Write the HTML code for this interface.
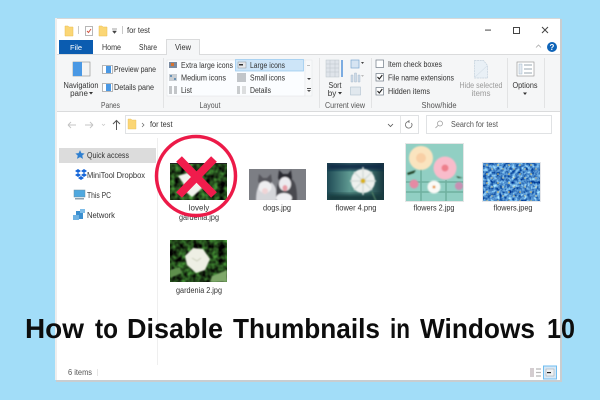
<!DOCTYPE html>
<html><head><meta charset="utf-8">
<style>
html,body{margin:0;padding:0;width:600px;height:400px;overflow:hidden;background:#a2ddf8}
svg{display:block;filter:blur(.3px)}
text{font-family:"Liberation Sans",sans-serif;font-size:8px;fill:#333}
.g{fill:#555}
.c{text-anchor:middle}
.h{font-size:27.5px;font-weight:bold;fill:#0d0d0d}
</style></head><body>
<svg width="600" height="400" viewBox="0 0 600 400" xmlns="http://www.w3.org/2000/svg">
<defs>
<filter id="b" x="-10%" y="-10%" width="120%" height="120%"><feGaussianBlur stdDeviation="0.7"/></filter>
<filter id="b2" x="-20%" y="-20%" width="140%" height="140%"><feGaussianBlur stdDeviation="2"/></filter>
<filter id="leaf" x="0" y="0" width="100%" height="100%" color-interpolation-filters="sRGB"><feTurbulence type="fractalNoise" baseFrequency="0.16" numOctaves="2" seed="4"/><feColorMatrix values="0.5 0 0 0 -0.12  1.1 0 0 0 -0.28  0.4 0 0 0 -0.1  0 0 0 0 1"/></filter>
<filter id="blue" x="0" y="0" width="100%" height="100%" color-interpolation-filters="sRGB"><feTurbulence type="fractalNoise" baseFrequency="0.32" numOctaves="2" seed="9"/><feColorMatrix values="1.2 0 0 0 -0.3  1.2 0 0 0 -0.05  0.8 0 0 0 0.4  0 0 0 0 1"/></filter>
<clipPath id="c1"><rect x="170" y="163" width="57" height="37"/></clipPath>
<clipPath id="c2"><rect x="249" y="169" width="57" height="31"/></clipPath>
<clipPath id="c3"><rect x="327" y="163" width="57" height="37"/></clipPath>
<clipPath id="c4"><rect x="406" y="144" width="57" height="57"/></clipPath>
<clipPath id="c5"><rect x="483" y="163" width="57" height="38"/></clipPath>
<clipPath id="c6"><rect x="170" y="240" width="57" height="42"/></clipPath>
<linearGradient id="g3" x1="0" y1="0" x2="1" y2="0"><stop offset="0" stop-color="#1f4a55"/><stop offset=".4" stop-color="#5f9a92"/><stop offset=".75" stop-color="#3d6f6b"/><stop offset="1" stop-color="#17363e"/></linearGradient>
<pattern id="fl" width="11" height="9" patternUnits="userSpaceOnUse"><circle cx="3" cy="3" r=".8" fill="#e6c868"/><circle cx="8" cy="7" r=".7" fill="#efdc90"/></pattern>
</defs>

<rect width="600" height="400" fill="#a2ddf8"/>
<rect x="56" y="19" width="506" height="363" fill="#c9cdd0"/>
<rect x="55" y="18" width="505" height="362" fill="#fff"/>
<rect x="55" y="18" width="505" height="1" fill="#d8d8d8"/>
<rect x="55" y="18" width="2" height="362" fill="#eeeeee"/>

<!-- title bar -->
<path d="M65 26h3l1 1h4v9h-8z" fill="#fbd675" stroke="#e8bd55" stroke-width=".5"/>
<rect x="78" y="26" width="1" height="8" fill="#c8c8c8"/>
<rect x="85.5" y="26.5" width="7" height="9" fill="#fff" stroke="#999" stroke-width=".7"/>
<path d="M87 31l1.500 1.500 2.500-3.500" fill="none" stroke="#d2503c" stroke-width="1"/>
<path d="M99 26h3l1 1h4v9h-8z" fill="#fbd675" stroke="#e8bd55" stroke-width=".5"/>
<path d="M112 29h5M112.500 31h4l-2 2.500z" fill="#444" stroke="#444" stroke-width=".5"/>
<rect x="122" y="26" width="1" height="8" fill="#c8c8c8"/>
<text x="127" y="33" textLength="23" lengthAdjust="spacingAndGlyphs">for test</text>

<rect x="485" y="29.5" width="6" height="1.2" fill="#666"/>
<rect x="513.5" y="27.5" width="6" height="6" fill="none" stroke="#444" stroke-width="1"/>
<path d="M542 27l6 6M548 27l-6 6" stroke="#444" stroke-width="1"/>
<path d="M536 47.500l2.500-2.500 2.500 2.500" fill="none" stroke="#aaa" stroke-width=".8"/>
<circle cx="552" cy="47" r="5" fill="#0f64b8"/>
<text x="552" y="50" class="c" style="fill:#fff;font-weight:bold;font-size:8px">?</text>

<!-- tabs -->
<rect x="59" y="40" width="34" height="14" fill="#0b5cb0"/>
<text x="76" y="50" class="c" style="fill:#fff;font-size:7.5px">File</text>
<text x="102" y="50" textLength="19" lengthAdjust="spacingAndGlyphs">Home</text>
<text x="139" y="50" textLength="18" lengthAdjust="spacingAndGlyphs">Share</text>
<rect x="57" y="54" width="503" height="58" fill="#f5f6f7"/>
<rect x="57" y="54" width="503" height="1" fill="#dadbdc"/>
<path d="M166.500 54.500v-15h33v15" fill="#f5f6f7" stroke="#dadbdc"/>
<rect x="167" y="53.5" width="32" height="2" fill="#f5f6f7"/>
<text x="175" y="50" textLength="16" lengthAdjust="spacingAndGlyphs">View</text>
<rect x="57" y="111" width="503" height="1" fill="#dadbdc"/>

<!-- panes -->
<rect x="73" y="62" width="17" height="14" fill="#f4f4f4" stroke="#8a8a8a" stroke-width=".6"/>
<rect x="73" y="62" width="9" height="14" fill="#4a98e4"/>
<text x="81" y="88" class="c" textLength="35" lengthAdjust="spacingAndGlyphs">Navigation</text>
<text x="79" y="96" class="c">pane</text><path d="M89 92h4l-2 2.500z" fill="#333"/>
<rect x="102.5" y="65.5" width="10" height="8" fill="#fff" stroke="#8a8a8a" stroke-width=".6"/><rect x="106" y="66" width="5" height="7" fill="#4a98e4"/>
<text x="114" y="72" textLength="42" lengthAdjust="spacingAndGlyphs">Preview pane</text>
<rect x="102.5" y="83.5" width="10" height="8" fill="#fff" stroke="#8a8a8a" stroke-width=".6"/><rect x="106" y="84" width="5" height="7" fill="#4a98e4"/>
<text x="114" y="90" textLength="40" lengthAdjust="spacingAndGlyphs">Details pane</text>
<text x="110.5" y="108" class="c g" textLength="19" lengthAdjust="spacingAndGlyphs">Panes</text>
<rect x="163" y="58" width="1" height="50" fill="#e2e3e4"/>

<!-- layout -->
<rect x="167" y="60" width="138" height="36" fill="#fbfdff" stroke="#e3e5e7" stroke-width=".6"/>
<rect x="235.5" y="59.5" width="68" height="11.5" fill="#cde5f8" stroke="#93c6ee" stroke-width=".7"/>
<rect x="169" y="62" width="8" height="6" fill="#7a8aa0"/><rect x="171" y="63" width="3" height="3" fill="#d8732f"/>
<rect x="169" y="74" width="8" height="7" fill="#c9ced3"/><rect x="170" y="75" width="2" height="2" fill="#6a93b5"/><rect x="174" y="78" width="2" height="2" fill="#6a93b5"/>
<rect x="169" y="86" width="3" height="8" fill="#c3c6c9"/><rect x="174" y="86" width="3" height="8" fill="#c3c6c9"/>
<text x="181" y="68" textLength="52" lengthAdjust="spacingAndGlyphs">Extra large icons</text>
<text x="181" y="80.5" textLength="45" lengthAdjust="spacingAndGlyphs">Medium icons</text>
<text x="181" y="93" textLength="11" lengthAdjust="spacingAndGlyphs">List</text>
<rect x="238" y="62" width="8" height="6" fill="#e6e9ec" stroke="#8a8f94" stroke-width=".5"/><rect x="239" y="64" width="4" height="1.5" fill="#333"/>
<rect x="237" y="73" width="9" height="9" fill="#c2c6ca"/>
<rect x="237" y="86" width="3" height="8" fill="#c9ccce"/><rect x="242" y="86" width="4" height="8" fill="#dcdedf"/>
<text x="250" y="68" textLength="35" lengthAdjust="spacingAndGlyphs">Large icons</text>
<text x="250" y="80.5" textLength="35" lengthAdjust="spacingAndGlyphs">Small icons</text>
<text x="250" y="93" textLength="21" lengthAdjust="spacingAndGlyphs">Details</text>
<rect x="305" y="60" width="7" height="36" fill="#f8f9fa" stroke="#e3e5e7" stroke-width=".5"/>
<rect x="307" y="65" width="3" height="1" fill="#bbb"/><path d="M307 78h4l-2 2z" fill="#444"/><path d="M307 88h4v1h-4zM307 90h4l-2 2z" fill="#555"/>
<text x="210" y="108" class="c g" textLength="21" lengthAdjust="spacingAndGlyphs">Layout</text>
<rect x="319" y="58" width="1" height="50" fill="#e2e3e4"/>

<!-- current view -->
<rect x="326" y="60" width="13" height="17" fill="#dfe4ea" stroke="#bcc3ca" stroke-width=".5"/>
<path d="M326 64h13M326 68h13M326 72h13M330 60v17M335 60v17" stroke="#bcc3ca" stroke-width=".5"/>
<path d="M342 60v17" stroke="#2b7cd3" stroke-width="1.2"/>
<text x="335" y="88" class="c" textLength="13" lengthAdjust="spacingAndGlyphs">Sort</text>
<text x="332" y="96" class="c">by</text><path d="M338 92h4l-2 2.500z" fill="#333"/>
<rect x="351" y="60" width="8" height="8" fill="#d6e4f2" stroke="#7aa8d2" stroke-width=".7"/><path d="M361 62h3l-1.500 2z" fill="#444"/>
<path d="M351 75h2v7h-2zM354.500 73h2v9h-2zM358 75h2v7h-2z" fill="#cddbe8" stroke="#9fb3c5" stroke-width=".4"/><path d="M361 75h3l-1.500 2z" fill="#bbb"/>
<rect x="350.5" y="87" width="10" height="8" fill="#e1e8ee" stroke="#a4b7c8" stroke-width=".5"/>
<text x="345" y="108" class="c g" textLength="40" lengthAdjust="spacingAndGlyphs">Current view</text>
<rect x="371" y="58" width="1" height="50" fill="#e2e3e4"/>

<!-- show/hide -->
<rect x="376" y="60" width="7.5" height="7.5" fill="#fff" stroke="#6f7a85" stroke-width=".7"/>
<rect x="376" y="73.5" width="7.5" height="7.5" fill="#fff" stroke="#6f7a85" stroke-width=".7"/>
<path d="M377.500 77l1.800 2 3-4" fill="none" stroke="#222" stroke-width="1.1"/>
<rect x="376" y="87.5" width="7.5" height="7.5" fill="#fff" stroke="#6f7a85" stroke-width=".7"/>
<path d="M377.500 91l1.800 2 3-4" fill="none" stroke="#222" stroke-width="1.1"/>
<text x="388" y="67" textLength="54" lengthAdjust="spacingAndGlyphs">Item check boxes</text>
<text x="388" y="80.5" textLength="66" lengthAdjust="spacingAndGlyphs">File name extensions</text>
<text x="388" y="94" textLength="42" lengthAdjust="spacingAndGlyphs">Hidden items</text>
<path d="M474.500 60.500h9l4 5v12.500h-13z" fill="#e9f0f6" stroke="#c3d0dc" stroke-width=".7" stroke-dasharray="2 .6"/>
<path d="M475 77l12-11" stroke="#d5dfe8" stroke-width=".6"/>
<text x="481" y="88" class="c" style="fill:#9a9a9a" textLength="43" lengthAdjust="spacingAndGlyphs">Hide selected</text>
<text x="481" y="96" class="c" style="fill:#9a9a9a">items</text>
<text x="439" y="108" class="c g" textLength="35" lengthAdjust="spacingAndGlyphs">Show/hide</text>
<rect x="507" y="58" width="1" height="50" fill="#e2e3e4"/>

<!-- options -->
<rect x="517" y="62" width="17" height="14" fill="#fff" stroke="#8c8c8c" stroke-width=".6"/>
<rect x="519" y="64" width="3" height="10" fill="#e4eaf0" stroke="#8faac2" stroke-width=".4"/>
<path d="M524 65h8M524 69h8M524 73h8" stroke="#7a8a98" stroke-width=".7"/>
<text x="525" y="88" class="c" textLength="25" lengthAdjust="spacingAndGlyphs">Options</text>
<path d="M523 92.500h4l-2 2.500z" fill="#333"/>
<rect x="544" y="58" width="1" height="50" fill="#e2e3e4"/>

<!-- address -->
<path d="M68 125h8M68 125l3-3M68 125l3 3" fill="none" stroke="#c4c4c4" stroke-width=".9"/>
<path d="M93 125h-8M93 125l-3-3M93 125l-3 3" fill="none" stroke="#c4c4c4" stroke-width=".9"/>
<path d="M102 124l1.500 1.500 1.500-1.500" fill="none" stroke="#c4c4c4" stroke-width=".7"/>
<path d="M116.500 130v-9M113 124l3.500-3.500 3.500 3.500" fill="none" stroke="#555" stroke-width="1"/>
<rect x="125.5" y="115.500" width="293" height="18" fill="#fff" stroke="#e0e2e4"/>
<path d="M128 119h3l1 1h4v9h-8z" fill="#fbd675" stroke="#e8bd55" stroke-width=".4"/>
<path d="M142 123l2 2-2 2" fill="none" stroke="#666" stroke-width=".7"/>
<text x="150" y="127" textLength="22.5" lengthAdjust="spacingAndGlyphs">for test</text>
<path d="M388 124l2.500 2.500 2.500-2.500" fill="none" stroke="#555" stroke-width=".8"/>
<rect x="400" y="116" width="1" height="17" fill="#e4e5e6"/>
<path d="M411.500 123a3.300 3.300 0 1 1-2.500-1.500M409 120v3" fill="none" stroke="#666" stroke-width=".8"/>
<rect x="426.5" y="115.500" width="125" height="18" fill="#fff" stroke="#e0e2e4"/>
<circle cx="440" cy="123.500" r="2.500" fill="none" stroke="#999" stroke-width=".7"/><path d="M438 125.500l-2.500 2.500" stroke="#999" stroke-width=".8"/>
<text x="451" y="127" class="g" textLength="47" lengthAdjust="spacingAndGlyphs">Search for test</text>

<!-- nav pane -->
<rect x="157" y="138" width="1" height="227" fill="#efefef"/>
<rect x="59" y="148" width="97" height="15" fill="#dcdcdc"/>
<path d="M80 150.500l1.300 2.800 3 .3-2.200 2 .7 3-2.800-1.600-2.800 1.600.7-3-2.200-2 3-.3z" fill="#2f7fd0" stroke="#2f7fd0" stroke-width=".3"/>
<text x="87" y="158" textLength="42" lengthAdjust="spacingAndGlyphs">Quick access</text>
<path d="M75 171l3-2 3 2-3 2zM81 171l3-2 3 2-3 2zM75 175l3-2 3 2-3 2zM81 175l3-2 3 2-3 2zM78 178l3-2 3 2-3 2z" fill="#1565d8"/>
<text x="87" y="178" textLength="58" lengthAdjust="spacingAndGlyphs">MiniTool Dropbox</text>
<rect x="74" y="190" width="11" height="7" fill="#4fa8df" stroke="#6f8fa5" stroke-width=".5"/><rect x="75" y="198" width="9" height="1.5" fill="#8fa0ad"/>
<text x="87" y="198" textLength="24" lengthAdjust="spacingAndGlyphs">This PC</text>
<rect x="76" y="211" width="7" height="8" fill="#3a8fd0"/><rect x="73" y="215" width="6" height="5" fill="#6fb2e2"/><rect x="80" y="209" width="5" height="4" fill="#7fbde8"/>
<text x="87" y="218" textLength="28" lengthAdjust="spacingAndGlyphs">Network</text>

<!-- thumbnails -->
<g clip-path="url(#c1)"><rect x="170" y="163" width="57" height="37" filter="url(#leaf)"/><g filter="url(#b)"><path d="M178 176l9-3 6 3 6 3 7 5-8 8-6 5-6-5-3-9z" fill="#f2f3ee"/></g></g>
<rect x="170" y="163" width="57" height="1" fill="#222"/>
<text x="199" y="210.5" class="c">lovely</text>
<text x="199" y="220" class="c" textLength="40" lengthAdjust="spacingAndGlyphs">gardenia.jpg</text>

<g clip-path="url(#c2)"><rect x="249" y="169" width="57" height="32" fill="#7c7e84"/><g filter="url(#b)">
<path d="M256 201c0-13 3-18 9-20 5-1 10 3 11 9l1 11z" fill="#d5d6da"/>
<path d="M258 181l1-7 4 4h4l4-4 1 7-2 4h-10z" fill="#55555b"/>
<ellipse cx="265" cy="187" rx="6.500" ry="6" fill="#eeeef0"/><ellipse cx="265" cy="191" rx="3" ry="3" fill="#f0d4d6"/>
<path d="M276 201c0-13 1-20 8-24 6-1 11 3 12 10 1 5 1 10 1 14z" fill="#4a4a50"/>
<path d="M278 178l1-8 4 4h5l3-4 1 8-2 4h-10z" fill="#2c2c32"/>
<ellipse cx="285" cy="184" rx="6" ry="7" fill="#ecebef"/><ellipse cx="285" cy="188" rx="2.500" ry="3" fill="#e79ba5"/><ellipse cx="284" cy="198" rx="8" ry="5" fill="#efeff2"/>
</g></g>
<text x="277" y="210.5" class="c" textLength="28" lengthAdjust="spacingAndGlyphs">dogs.jpg</text>

<g clip-path="url(#c3)"><rect x="327" y="163" width="57" height="37" fill="url(#g3)"/><rect x="327" y="163" width="57" height="7" fill="#0f2c45" filter="url(#b2)"/><rect x="327" y="194" width="57" height="8" fill="#173b3e" filter="url(#b2)"/>
<g filter="url(#b)"><circle cx="363" cy="181" r="12" fill="#eef1ee"/><path d="M363 167v28M350 181h26M354 172l18 18M372 172l-18 18" stroke="#d3dcd8" stroke-width="1.5"/><circle cx="363" cy="181" r="2.500" fill="#d8b21c"/><path d="M372 192l4 9" stroke="#5a8a6a" stroke-width="1"/></g></g>
<text x="356" y="210.5" class="c" textLength="41" lengthAdjust="spacingAndGlyphs">flower 4.png</text>

<g clip-path="url(#c4)"><rect x="406" y="144" width="57" height="57" fill="#91cfc3"/>
<path d="M406 182h57M406 192h57M421 168v33M446 180v21" stroke="#6fb09f" stroke-width="1.5"/>
<g filter="url(#b)"><circle cx="421" cy="158" r="12" fill="#fae4bf"/><circle cx="421" cy="158" r="5" fill="#f8cfa5"/>
<circle cx="445" cy="168" r="11.500" fill="#f9bccb"/><circle cx="445" cy="168" r="3.500" fill="#ee7f8c"/>
<circle cx="434" cy="187" r="6.500" fill="#fafaf7"/><circle cx="434" cy="187" r="1.500" fill="#e8973a"/>
<circle cx="414" cy="184" r="4.500" fill="#e58aa4"/><circle cx="459" cy="186" r="4" fill="#c88fb3"/>
<path d="M407 173l9-3-2 3-6 2zM456 176l7 2-5 0z" fill="#1e3c22"/></g></g>
<rect x="405.5" y="143.500" width="58" height="58" fill="none" stroke="#e4e6e6"/>
<text x="434" y="210.5" class="c" textLength="41" lengthAdjust="spacingAndGlyphs">flowers 2.jpg</text>

<g clip-path="url(#c5)"><rect x="483" y="163" width="57" height="38" filter="url(#blue)"/><rect x="483" y="163" width="57" height="38" fill="url(#fl)"/></g>
<rect x="482.5" y="162.500" width="58" height="39" fill="none" stroke="#e4e6ea"/>
<text x="513" y="210.5" class="c" textLength="39" lengthAdjust="spacingAndGlyphs">flowers.jpeg</text>

<g clip-path="url(#c6)"><rect x="170" y="240" width="57" height="42" filter="url(#leaf)"/><g filter="url(#b)"><path d="M185 256l8-8 10 1 7 10-5 11-9 3-9-8z" fill="#eeefe4"/><path d="M192 258l5 3 4-3" stroke="#c9cdb8" stroke-width="1" fill="none"/><path d="M212 276l15-6v12h-17z" fill="#7fa86a"/><path d="M170 270l10-3 2 6-12 5z" fill="#5e8f4e"/></g></g>
<text x="199" y="293" class="c" textLength="46" lengthAdjust="spacingAndGlyphs">gardenia 2.jpg</text>

<!-- red mark -->
<circle cx="196" cy="176" r="39.5" fill="none" stroke="#ec1a48" stroke-width="3.5"/>
<path d="M179 159l35 36M214 159l-35 36" stroke="#f01c4c" stroke-width="8"/>

<!-- status -->
<text x="68" y="375" class="g" textLength="24" lengthAdjust="spacingAndGlyphs">6 items</text>
<rect x="97" y="369" width="1" height="7" fill="#e6e6e6"/>
<rect x="530" y="368" width="4" height="9" fill="#d4cdd0"/><path d="M536 369h5M536 372.500h5M536 376h5" stroke="#b8b8b8" stroke-width="1.2"/>
<rect x="543.5" y="366" width="13" height="13" fill="#d7e8f6" stroke="#6fbdf0"/>
<rect x="546" y="369" width="8" height="7" fill="#eef1f3" stroke="#99a0a6" stroke-width=".5"/><rect x="547" y="372" width="4" height="1.2" fill="#222"/>

<!-- headline: each word is fitted to its measured extent -->
<text x="25" y="338" class="h" textLength="59" lengthAdjust="spacingAndGlyphs">How</text>
<text x="95" y="338" class="h" textLength="23" lengthAdjust="spacingAndGlyphs">to</text>
<text x="127" y="338" class="h" textLength="96" lengthAdjust="spacingAndGlyphs">Disable</text>
<text x="233" y="338" class="h" textLength="147" lengthAdjust="spacingAndGlyphs">Thumbnails</text>
<text x="390" y="338" class="h" textLength="20" lengthAdjust="spacingAndGlyphs">in</text>
<text x="420" y="338" class="h" textLength="115" lengthAdjust="spacingAndGlyphs">Windows</text>
<text x="547" y="338" class="h" textLength="28" lengthAdjust="spacingAndGlyphs">10</text>
</svg>
</body></html>
